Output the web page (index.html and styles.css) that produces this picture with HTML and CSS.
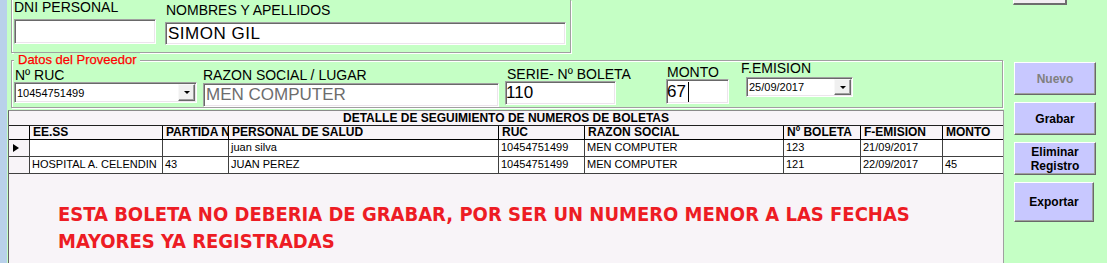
FILE: index.html
```html
<!DOCTYPE html>
<html lang="es">
<head>
<meta charset="utf-8">
<title>Seguimiento de boletas</title>
<link rel="stylesheet" href="styles.css">
</head>
<body>
<div class="screen">
  <div class="edge"></div>
  <div class="form">
    <div class="top-panel">
      <div class="fcol dni">
        <span class="lbl">DNI PERSONAL</span>
        <div class="field dni-field"></div>
      </div>
      <div class="fcol nombre">
        <span class="lbl">NOMBRES Y APELLIDOS</span>
        <div class="field big name-field">SIMON GIL</div>
      </div>
    </div>

    <div class="group">
      <span class="group-title">Datos del Proveedor</span>
      <div class="gcol ruc">
        <span class="lbl">Nº RUC</span>
        <div class="combo ruc-combo"><span class="combo-text">10454751499</span><span class="drop"><i class="arrow"></i></span></div>
      </div>
      <div class="gcol razon">
        <span class="lbl">RAZON SOCIAL / LUGAR</span>
        <div class="field big razon-field">MEN COMPUTER</div>
      </div>
      <div class="gcol serie">
        <span class="lbl">SERIE- Nº BOLETA</span>
        <div class="field big serie-field">110</div>
      </div>
      <div class="gcol monto">
        <span class="lbl">MONTO</span>
        <div class="field big monto-field">67<span class="caret"></span></div>
      </div>
      <div class="gcol femision">
        <span class="lbl">F.EMISION</span>
        <div class="combo date-combo"><span class="combo-text">25/09/2017</span><span class="drop"><i class="arrow"></i></span></div>
      </div>
    </div>

    <div class="grid">
      <div class="g-title">DETALLE DE SEGUIMIENTO DE NUMEROS DE BOLETAS</div>
      <div class="g-row g-head">
        <span class="ind"></span>
        <span>EE.SS</span>
        <span>PARTIDA Nº</span>
        <span>PERSONAL DE SALUD</span>
        <span>RUC</span>
        <span>RAZON SOCIAL</span>
        <span>Nº BOLETA</span>
        <span>F-EMISION</span>
        <span>MONTO</span>
      </div>
      <div class="g-row g-data">
        <span class="ind"><i class="pointer"></i></span>
        <span></span>
        <span></span>
        <span>juan silva</span>
        <span>10454751499</span>
        <span>MEN COMPUTER</span>
        <span>123</span>
        <span>21/09/2017</span>
        <span></span>
      </div>
      <div class="g-row g-data">
        <span class="ind"></span>
        <span>HOSPITAL A. CELENDIN</span>
        <span>43</span>
        <span>JUAN PEREZ</span>
        <span>10454751499</span>
        <span>MEN COMPUTER</span>
        <span>121</span>
        <span>22/09/2017</span>
        <span>45</span>
      </div>
      <p class="note">ESTA BOLETA NO DEBERIA DE GRABAR, POR SER UN NUMERO MENOR A LAS FECHAS<br>MAYORES YA REGISTRADAS</p>
    </div>
  </div>

  <div class="buttons">
    <div class="btn-top"></div>
    <button class="btn btn-nuevo" disabled>Nuevo</button>
    <button class="btn btn-grabar">Grabar</button>
    <button class="btn btn-eliminar">Eliminar<br>Registro</button>
    <button class="btn btn-exportar">Exportar</button>
  </div>
</div>
</body>
</html>
```

FILE: styles.css
```css
html, body {
  margin: 0;
  padding: 0;
}
body {
  width: 1107px;
  height: 263px;
  overflow: hidden;
  background: #c5ffc5;
  font-family: "Liberation Sans", Arial, sans-serif;
  color: #000;
}
.screen {
  display: flex;
  height: 263px;
}
.edge {
  flex: none;
  width: 7px;
  background: #b9d1ea;
}
.form {
  flex: none;
  width: 996px;
  display: flex;
  flex-direction: column;
}

/* labels & fields */
.lbl {
  display: block;
  font-size: 14px;
  line-height: 14px;
  white-space: nowrap;
}
.field {
  box-sizing: border-box;
  background: #fff;
  border: 1px solid;
  border-color: #a0a0a0 #fff #fff #a0a0a0;
  box-shadow: inset 1px 1px 0 #696969, inset -1px -1px 0 #ece4ec;
}
.big {
  display: flex;
  align-items: center;
  font-size: 17px;
  white-space: nowrap;
  overflow: hidden;
}

/* top panel */
.top-panel {
  flex: none;
  box-sizing: border-box;
  margin-left: 4px;
  width: 560px;
  height: 53px;
  border: 1px solid #a0a0a0;
  border-top: none;
  box-shadow: inset 1px 0 0 #fff, 1px 1px 0 #fff;
  display: flex;
  gap: 9px;
  padding-left: 2px;
}
.fcol {
  display: flex;
  flex-direction: column;
}
.dni {
  width: 142px;
}
.dni-field {
  margin-top: 5px;
  height: 25px;
}
.nombre {
  width: 401px;
  padding-top: 3px;
}
.nombre .lbl {
  padding-left: 1px;
}
.name-field {
  margin-top: 5px;
  height: 23px;
  padding-left: 2px;
  letter-spacing: 0.5px;
}

/* group box */
.group {
  flex: none;
  position: relative;
  box-sizing: border-box;
  margin: 7px 0 0 4px;
  width: 992px;
  height: 48px;
  border: 1px solid #a0a0a0;
  box-shadow: inset 1px 1px 0 #fff, 1px 1px 0 #fff;
  display: flex;
  align-items: flex-start;
  padding-left: 2px;
}
.group-title {
  position: absolute;
  top: -8px;
  left: 2px;
  padding: 0 3px 0 4px;
  background: #c5ffc5;
  color: #ff0000;
  font-size: 13px;
  line-height: 14px;
  white-space: nowrap;
  -webkit-text-stroke: 0.25px #ff0000;
}
.gcol {
  display: flex;
  flex-direction: column;
  flex: none;
}
.ruc {
  width: 183px;
  padding-top: 7px;
}
.ruc .lbl {
  padding-left: 1px;
}
.razon {
  width: 296px;
  margin-left: 6px;
  padding-top: 7px;
}
.razon-field {
  margin-top: 1px;
  height: 24px;
  padding-left: 2px;
  color: #6d6d6d;
}
.serie {
  width: 111px;
  margin-left: 6px;
  padding-top: 6px;
}
.serie .lbl {
  padding-left: 2px;
}
.serie-field {
  height: 24px;
}
.monto {
  width: 63px;
  margin-left: 50px;
  padding-top: 4px;
}
.monto .lbl {
  padding-left: 1px;
}
.monto-field {
  height: 25px;
}
.caret {
  display: inline-block;
  width: 1px;
  height: 20px;
  margin-left: 2px;
  background: #000;
}
.femision {
  margin-left: 12px;
}

/* combos */
.combo {
  box-sizing: border-box;
  display: flex;
  align-items: center;
  background: #fff;
  border: 1px solid;
  border-color: #a0a0a0 #fff #fff #a0a0a0;
  box-shadow: inset 1px 1px 0 #696969, inset -1px -1px 0 #ece4ec;
  font-size: 11px;
  padding: 0 1px 0 2px;
}
.combo-text {
  flex: 1;
  white-space: nowrap;
}
.drop {
  box-sizing: border-box;
  flex: none;
  display: flex;
  align-items: center;
  justify-content: center;
  width: 17px;
  background: #f0f0f0;
  border-style: solid;
  border-width: 1px;
  border-color: #f8f8f8 #696969 #696969 #f8f8f8;
  box-shadow: inset -1px -1px 0 #a0a0a0;
}
.arrow {
  display: block;
  width: 0;
  height: 0;
  border-top: 3px solid #000;
  border-left: 3px solid transparent;
  border-right: 3px solid transparent;
}
.ruc-combo {
  height: 21px;
}
.ruc-combo .drop {
  height: 17px;
}
.date-combo {
  margin: 2px 0 0 5px;
  width: 107px;
  height: 20px;
}
.date-combo .drop {
  height: 16px;
}

/* grid */
.grid {
  flex: 1;
  box-sizing: border-box;
  margin: 2px 0 0 1px;
  width: 996px;
  background: #f8f4f8;
  border-top: 1px solid #8a8a8a;
  border-left: 1px solid #646464;
  border-right: 1px solid #a0a0a0;
}
.g-title {
  height: 14px;
  line-height: 14px;
  text-align: center;
  font-weight: bold;
  font-size: 12px;
  border-bottom: 1px solid #202020;
  white-space: nowrap;
}
.g-row {
  display: grid;
  grid-template-columns: 21px 133px 66px 270px 86px 199px 77px 82px 60px;
}
.g-row > span {
  box-sizing: border-box;
  overflow: hidden;
  white-space: nowrap;
  border-right: 1px solid #404040;
}
.g-row > span:last-child {
  border-right: none;
}
.g-head {
  height: 13px;
  border-bottom: 1px solid #000;
  font-weight: bold;
  font-size: 12px;
  line-height: 12px;
}
.g-head > span {
  padding-left: 3px;
  border-right-color: #000;
}
.g-data {
  height: 16px;
  border-bottom: 1px solid #404040;
  font-size: 11px;
  line-height: 15px;
  background: #fff;
}
.g-data > span {
  padding-left: 2px;
}
.g-row > .ind {
  background: #f8f4f8;
  padding-left: 4px;
  display: flex;
  align-items: center;
}
.pointer {
  display: block;
  width: 0;
  height: 0;
  border-left: 6px solid #000;
  border-top: 4.5px solid transparent;
  border-bottom: 4.5px solid transparent;
}
.note {
  margin: 27px 0 0 49px;
  color: #ed1c24;
  font-family: "DejaVu Sans Condensed", "DejaVu Sans", sans-serif;
  font-stretch: condensed;
  font-weight: bold;
  font-size: 20px;
  line-height: 27px;
  white-space: nowrap;
}

/* buttons */
.buttons {
  flex: none;
  margin-left: 10px;
  display: flex;
  flex-direction: column;
  align-items: flex-start;
}
.btn-top {
  box-sizing: border-box;
  width: 54px;
  height: 5px;
  background: #f2eef2;
  border-left: 1px solid #fff;
  border-right: 2px solid #6d6d6d;
  border-bottom: 2px solid #6d6d6d;
}
.btn {
  box-sizing: border-box;
  margin: 7px 0 0 1px;
  padding: 0;
  width: 82px;
  height: 33px;
  background: #c8c8ff;
  border-style: solid;
  border-width: 1px;
  border-color: #fff #696969 #696969 #fff;
  box-shadow: inset -1px -1px 0 #a0a0a0;
  font-family: "Liberation Sans", Arial, sans-serif;
  font-weight: bold;
  font-size: 12px;
  line-height: 14px;
  color: #000;
  text-align: center;
}
.btn-nuevo {
  margin-top: 57px;
  color: #808080;
}
.btn-exportar {
  width: 80px;
  height: 40px;
}
```
